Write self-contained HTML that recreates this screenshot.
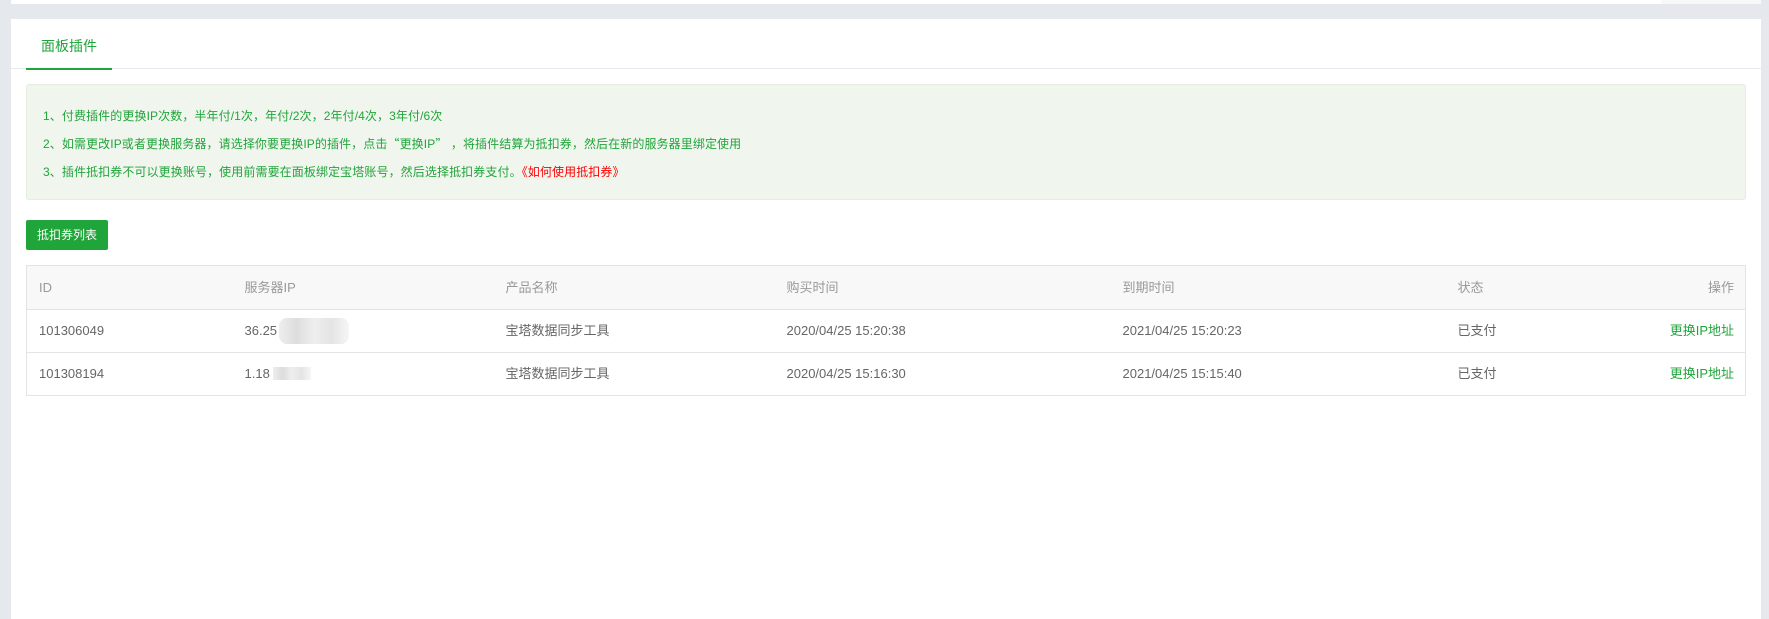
<!DOCTYPE html>
<html><head><meta charset="utf-8"><style>
*{margin:0;padding:0;box-sizing:border-box}
body{width:1769px;height:616px;background:#e5e8ed;font-family:"Liberation Sans","Noto Sans CJK SC",sans-serif;position:relative;overflow:hidden}
.top{position:absolute;left:11px;top:0;width:1750px;height:4px;background:#fff}
.top i{position:absolute;right:0;top:0;width:100px;height:4px;background:#f7f8f8}
.card{position:absolute;left:11px;top:19px;width:1750px;height:600px;background:#fff}
.tab{position:absolute;left:30px;top:17px;font-size:14px;color:#20a53a}
.tabline{position:absolute;left:15px;top:49px;width:86px;height:2px;background:#20a53a}
.hline{position:absolute;left:0;top:49px;width:1750px;height:1px;background:#e6e9ee}
.alert{position:absolute;left:15px;top:65px;width:1720px;height:116px;background:#f0f5ee;border:1px solid #e3eedd;border-radius:3px;font-size:12px;color:#20a53a}
.alert p{position:absolute;left:16px;white-space:nowrap;letter-spacing:0.1px}
.q{font-family:"Noto Sans CJK SC",sans-serif}
.red{color:#f00}
.btn{position:absolute;left:15px;top:201px;width:82px;height:30px;background:#20a53a;color:#fff;font-size:12px;line-height:30px;text-align:center;border-radius:2px}
table{position:absolute;left:15px;top:246px;width:1720px;border-collapse:collapse;font-size:13px;color:#666;border:1px solid #e2e4e7}
td,th{border-top:1px solid #e2e4e7;height:43px;font-weight:normal;text-align:left;padding:0;position:relative;line-height:16px}
th{background:#f8f8f8;color:#999;height:44px}
.r{text-align:right;padding-right:11px}
.g{color:#20a53a}
.blur{position:absolute;top:50%;background:linear-gradient(90deg,#eee,#ddd,#eee,#e4e4e4,#f6f6f6)}
</style></head><body>
<div class="top"><i></i></div>
<div class="card">
<div class="tab">面板插件</div>
<div class="hline"></div><div class="tabline"></div>
<div class="alert">
<p style="top:22px">1、付费插件的更换IP次数，半年付/1次，年付/2次，2年付/4次，3年付/6次</p>
<p style="top:50px">2、如需更改IP或者更换服务器，请选择你要更换IP的插件，点击<span class="q">“</span>更换IP<span class="q">”</span> ，将插件结算为抵扣券，然后在新的服务器里绑定使用</p>
<p style="top:78px">3、插件抵扣券不可以更换账号，使用前需要在面板绑定宝塔账号，然后选择抵扣券支付。<span class="red">《如何使用抵扣券》</span></p>
</div>
<div class="btn">抵扣券列表</div>
<table>
<colgroup><col style="width:218px"><col style="width:261px"><col style="width:281px"><col style="width:336px"><col style="width:335px"><col style="width:150px"><col></colgroup>
<tr><th style="padding-left:12px">ID</th><th>服务器IP</th><th>产品名称</th><th>购买时间</th><th>到期时间</th><th>状态</th><th class="r">操作</th></tr>
<tr><td style="padding-left:12px">101306049</td><td>36.25<span class="blur" style="left:34px;margin-top:-13px;width:70px;height:26px;border-radius:8px"></span></td><td>宝塔数据同步工具</td><td>2020/04/25 15:20:38</td><td>2021/04/25 15:20:23</td><td>已支付</td><td class="r g">更换IP地址</td></tr>
<tr><td style="padding-left:12px">101308194</td><td>1.18<span class="blur" style="left:28px;margin-top:-7px;width:38px;height:13px"></span></td><td>宝塔数据同步工具</td><td>2020/04/25 15:16:30</td><td>2021/04/25 15:15:40</td><td>已支付</td><td class="r g">更换IP地址</td></tr>
</table>
</div>
</body></html>
